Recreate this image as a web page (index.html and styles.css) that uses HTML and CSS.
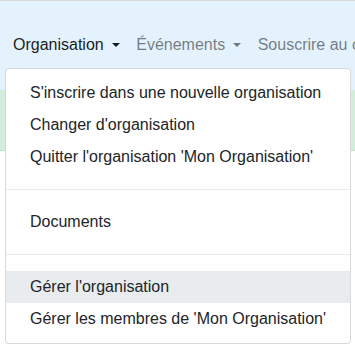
FILE: index.html
```html
<!DOCTYPE html>
<html lang="fr">
<head>
<meta charset="utf-8">
<link rel="stylesheet" href="styles.css">
</head>
<body>
<div class="page">
<div class="topline"></div>
<nav class="navbar">
  <div class="nav-item dropdown">
    <a class="nav-link active">Organisation<span class="caret"></span></a>
    <div class="dropdown-menu">
      <a class="dropdown-item">S'inscrire dans une nouvelle organisation</a>
      <a class="dropdown-item">Changer d'organisation</a>
      <a class="dropdown-item">Quitter l'organisation 'Mon Organisation'</a>
      <div class="dropdown-divider"></div>
      <a class="dropdown-item">Documents</a>
      <div class="dropdown-divider"></div>
      <a class="dropdown-item hover">Gérer l'organisation</a>
      <a class="dropdown-item">Gérer les membres de 'Mon Organisation'</a>
    </div>
  </div>
  <div class="nav-item">
    <a class="nav-link">Événements<span class="caret"></span></a>
  </div>
  <div class="nav-item">
    <a class="nav-link">Souscrire au calendrier</a>
  </div>
</nav>
<div class="alert"></div>
</div>
</body>
</html>
```
FILE: styles.css
```css
body {
  margin: 0;
  padding: 0;
  background: #fff;
  font-family: "Liberation Sans", Arial, sans-serif;
  font-size: 16px;
  line-height: 1.5;
  color: #212529;
}
.page {
  width: 355px;
  height: 353px;
  overflow: hidden;
  position: relative;
}
.topline {
  height: 1px;
  background: #d6d8da;
}
.navbar {
  background: #e3f2fd;
  height: 65px;
  padding: 24px 0 0 5px;
  display: flex;
  align-items: flex-start;
  white-space: nowrap;
}
.nav-item {
  position: relative;
  flex: none;
}
.nav-link {
  display: block;
  padding: 8px;
  color: rgba(0, 0, 0, 0.5);
}
.nav-link.active {
  color: rgba(0, 0, 0, 0.9);
}
.caret {
  display: inline-block;
  margin: 0 0.5px 0 8px;
  vertical-align: 3px;
  border-top: 4.5px solid;
  border-left: 4px solid transparent;
  border-right: 4px solid transparent;
}
.dropdown-menu {
  position: absolute;
  top: 100%;
  left: 0;
  margin-top: 3px;
  width: 344px;
  padding: 8px 0;
  background: #fff;
  border: 1px solid rgba(0, 0, 0, 0.15);
  border-radius: 4px;
  z-index: 10;
}
.dropdown-item {
  display: block;
  padding: 4px 24px;
  color: #212529;
  white-space: nowrap;
}
.dropdown-item.hover {
  background: #e9ecef;
}
.dropdown-divider {
  height: 0;
  margin: 16px 0 16px;
  border-top: 1px solid #e9ecef;
}
.alert {
  height: 60px;
  background: #d4edda;
  border-bottom: 1px solid #c3e6cb;
}
```
